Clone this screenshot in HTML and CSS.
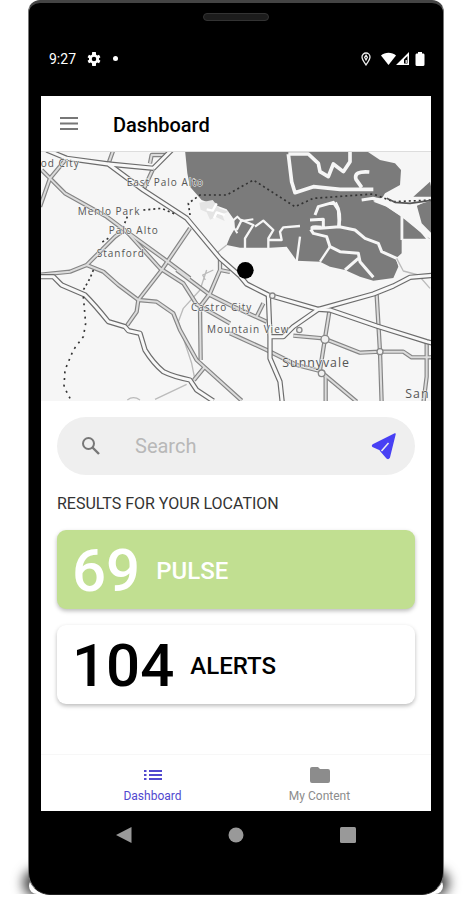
FILE: index.html
```html
<!DOCTYPE html>
<html lang="en">
<head>
<meta charset="utf-8">
<meta name="viewport" content="width=device-width, initial-scale=1">
<title>Dashboard</title>
<link rel="stylesheet" href="styles.css">
</head>
<body>
<div class="phone">
  <div class="speaker"></div>
  <div class="status">
    <span class="time">9:27</span>
    <svg class="gear" width="14" height="14" viewBox="2 2 20 20" aria-hidden="true"><path fill="#fff" fill-rule="evenodd" d="M19.1 13c.1-.7.1-1.3 0-2l2.1-1.600-2-3.500-2.500 1-1.700-1L14.600 2H9.400L9 5.900l-1.700 1-2.500-1-2 3.500L4.900 11c-.1.700-.1 1.300 0 2l-2.100 1.600 2 3.500 2.500-1 1.700 1 .4 3.900h5.200l.4-3.900 1.700-1 2.500 1 2-3.500zM12 15.200a3.200 3.200 0 1 1 0-6.400 3.200 3.200 0 0 1 0 6.400z"/></svg>
    <span class="dot"></span>
    <span class="spacer"></span>
    <svg class="pin" width="10" height="14" viewBox="0 0 10 14" fill="none" stroke="#eee" aria-hidden="true"><path stroke-width="1.300" d="M5 13C3 10 1 7.500 1 5a4 4 0 0 1 8 0c0 2.500-2 5-4 8z"/><path stroke-width="1.200" d="M5 3.200 3.600 5.400 5 8l1.400-2.600z"/></svg>
    <svg width="15" height="13" viewBox="0 0 15 13" aria-hidden="true"><path fill="#fff" d="M0 3.500C4-.2 11-.2 15 3.500L7.500 13z"/></svg>
    <svg class="signal" width="13" height="13" viewBox="0 0 13 13" aria-hidden="true"><path fill="#fff" fill-rule="evenodd" d="M13 0v13H0zM11.500 4 8 7.500v4h3.500z"/><path fill="#fff" d="M9.600 8h1.200v3H9.600z"/></svg>
    <svg width="10" height="14" viewBox="0 0 10 14" aria-hidden="true"><path fill="#fff" d="M3 0h4v1.500h1.500Q9.500 1.500 9.500 3v9.500q0 1.500-1.500 1.500H2Q.5 14 .5 12.500V3q0-1.500 1-1.500H3z"/></svg>
  </div>

  <div class="screen">
    <header class="appbar">
      <button class="menu" aria-label="Menu"><svg width="20" height="14" viewBox="0 0 20 14"><path d="M1 1h18M1 6.500h18M1 12h18" stroke="#777" stroke-width="1.800"/></svg></button>
      <h1>Dashboard</h1>
    </header>

    <svg class="map" viewBox="3 6 1170 747" role="img" aria-label="Map">
      <defs>
        <g id="highways">
          <path d="M20 0 80 25 205 42 310 120 440 205 540 325 600 378 620 402 685 435 835 478 870 480 1010 528 1160 575 1180 580"/>
          <path d="M835 478 1000 432 1060 408 1110 382 1180 376"/>
          <path d="M0 380H40L65 405 135 435Q165 465 205 515L255 530 265 542 300 550 315 600Q340 640 370 665 400 680 450 690L470 720 520 753"/>
          <path d="M685 435 690 560V625L720 695 727 760M835 478 760 530 730 560H690M340 55 395 0M205 42 340 55"/>
        </g>
        <g id="roads">
          <path d="M80 25 30 85 75 130 200 200 260 245 370 325 450 385M30 85 5 60M30 85 0 170M205 42 220 0M340 55 310 120M330 40 335 15 375 15"/>
          <path d="M410 360 510 435 570 465 680 515M260 245 360 355 430 400 470 463 570 520M570 550 680 600 770 645 840 663 950 755"/>
          <path d="M0 374 90 365 140 345 225 260 245 245M140 345 190 365 235 405 295 450 290 485 262 525M295 450 365 360 450 235M295 450 350 455 400 490 420 540 470 630 605 752M495 650 462 690M480 470 482 630M480 470 510 430 540 360V320"/>
          <path d="M760 557 850 565 960 608 1020 605H1090L1115 622H1180M868 485 855 565 840 660 857 680V760M1010 435 1020 605 1025 760M1160 575V680L1150 760M670 460 650 500M540 360 570 366"/>
        </g>
      </defs>
      <rect x="0" width="1180" height="760" fill="#f6f6f6"/>
      <path fill="#7b7b7b" d="M435 0 442 70 450 110 485 150 560 178 583 210 585 235 570 260 560 285 600 293 690 293 740 290 770 332 840 335 870 350 915 360 960 380 1000 392 1060 384 1075 350 1068 325 1085 310V200L1040 170 1000 155 1028 142 1035 130 1080 105 1083 60 1065 40 1020 30 975 0zM1090 205 1145 250 1170 266H1090zM1130 165 1180 150V255L1145 220zM1120 140 1170 95 1180 140z"/>
      <g class="channels">
        <path stroke-width="11" d="M745 12 755 95 765 128 820 110 900 118H1000M745 12H805L835 40 840 65 865 80 880 42 910 65 930 35V0M988 66Q940 62 948 88L965 112"/>
        <path stroke-width="9" d="M825 195 835 170 880 157 895 180 898 230 840 235 815 234M850 230V208L810 210M898 230 945 240 975 265 1015 280 1025 305 1070 325 1085 355 1120 365M812 238 820 250 860 260 870 290 900 305 955 310 960 335 1000 382M955 325 915 360M965 150 1000 145 1040 165 1085 195"/>
        <path stroke-width="7" d="M590 240 605 210 640 225 615 265V295M645 230 670 212 700 240 685 265V295M685 270H725L720 245 730 232 780 228M780 260 770 335M870 290 840 335M1085 190V270M1085 190 1145 245 1170 275M1120 210 1128 165 1160 150"/>
        <path stroke-width="10" d="M886 158Q905 190 896 230M820 238Q805 228 845 232M1000 146 1030 152"/>
        <path stroke-width="6" d="M575 215 592 200 605 213 640 208M583 235 592 250"/>
      </g>
      <path fill="#e4e4e4" d="m478 158 40-8 20 25 28 10-20 8 8 20-26-12-18 8-10-22-18-8z"/>
      <path fill="none" stroke="#fff" stroke-width="7" d="m500 178 18 4 12-22M522 205l8-18 24 8"/>
      <path class="creek" d="M560 285l-25 20-3 20M520 360l-32 15 8 15M500 360l-20 60-50 55-15 40 20 65 20 60 8 40M345 748l95-45M262 750q18-14 38 0M1070 325l20 38 45 12 35 40"/>
      <use href="#roads" class="road-edge"/>
      <use href="#roads" class="road-fill"/>
      <use href="#highways" class="highway-edge"/>
      <use href="#highways" class="highway-fill"/>
      <g class="junctions"><circle cx="855" cy="568" r="12"/><circle cx="1020" cy="605" r="9"/><circle cx="697" cy="437" r="8"/><circle cx="845" cy="670" r="10"/><circle cx="778" cy="540" r="8"/></g>
      <path class="ferry" d="M450 195 445 160 480 135 560 135 640 90 765 170 820 145 1000 132 1060 155 1180 150M310 180 365 175 405 192M262 200 250 230M205 265 180 280M160 360 150 385 130 420"/>
      <path class="ferry trail" d="M130 440 137 520 130 560 100 600 75 660 72 710 90 745"/>
      <path fill="none" stroke="#555" stroke-width="5" d="M1040 145 1065 157 1110 160 1180 150"/>
      <g class="places">
        <text x="2" y="52">od City</text>
        <text x="260" y="107">East Palo Alto</text>
        <text x="113" y="195">Menlo Park</text>
        <text x="206" y="251">Palo Alto</text>
        <text x="170" y="321">Stanford</text>
        <text x="453" y="484">Castro City</text>
        <text x="501" y="548">Mountain View</text>
        <text class="city" x="727" y="651">Sunnyvale</text>
        <text class="city" x="1096" y="744">San</text>
      </g>
      <circle cx="616" cy="361" r="25"/>
    </svg>

    <main>
      <form class="search" role="search">
        <svg width="20" height="20" viewBox="0 0 20 20" fill="none" stroke="#777" aria-hidden="true"><circle cx="7.500" cy="7.500" r="5.500" stroke-width="2"/><path d="m11.500 11.500 6.500 6.500" stroke-width="2.400"/></svg>
        <input type="search" placeholder="Search" aria-label="Search">
        <button type="button" aria-label="Use my location"><svg width="26" height="28" viewBox="0 0 26 28"><path fill="#4840f4" stroke="#4840f4" stroke-width="1.500" stroke-linejoin="round" d="M24 2 2 13q-1 .8.300 1.500L9 17.500l1 1.500 6 7q1.500 1 2.200-.5z"/><path d="M10.500 19 17.500 11" stroke="#efefef" stroke-width="1.500"/></svg></button>
      </form>
      <h2>RESULTS FOR YOUR LOCATION</h2>
      <section class="card pulse"><strong>69</strong><span>PULSE</span></section>
      <section class="card"><strong>104</strong><span>ALERTS</span></section>
    </main>

    <nav class="tabs">
      <a class="active" href="#dashboard"><svg width="20" height="18" viewBox="0 0 20 18"><path d="M1 5h2.500M1 9h2.500M1 13h2.500M6 5h13M6 9h13M6 13h13" stroke="#5148cf" stroke-width="2"/></svg>Dashboard</a>
      <a href="#content"><svg width="20" height="18" viewBox="0 0 20 18"><path fill="#8c8c8c" d="M2 1h6l2 2h8q2 0 2 2v10q0 2-2 2H2q-2 0-2-2V3q0-2 2-2z"/></svg>My Content</a>
    </nav>
  </div>

  <div class="system">
    <button aria-label="Back"><svg width="16" height="16" viewBox="0 0 16 16"><path d="M15.500 0v16L0 8z"/></svg></button>
    <button aria-label="Home"><svg width="16" height="16" viewBox="0 0 16 16"><circle cx="8" cy="8" r="7.500"/></svg></button>
    <button aria-label="Recent apps"><svg width="16" height="16" viewBox="0 0 16 16"><rect width="16" height="16" rx="1.500"/></svg></button>
  </div>
</div>
</body>
</html>
```
FILE: styles.css
```css
* { box-sizing: border-box; }

body {
  margin: 0;
  padding: 0 27px 5px 28px;
  background: #fff;
  font-family: Roboto, "Liberation Sans", sans-serif;
  color: #000;
}

button {
  display: flex;
  padding: 0;
  border: 0;
  background: none;
}

svg { flex: none; }

.phone {
  position: relative;
  padding: 10px 12px 0;
  background: #000;
  border: 1px solid #777;
  border-top: 3px solid #444;
  border-bottom-color: #222;
  border-radius: 12px 12px 22px 22px;
}

.phone::before {
  content: "";
  position: absolute;
  z-index: -1;
  left: 0;
  right: 0;
  bottom: 0;
  height: 16px;
  border-radius: 12px;
  box-shadow: 0 -3px 12px 6px #000b;
  clip-path: inset(-24px -24px 0);
}

.speaker {
  width: 66px;
  height: 8px;
  margin: 0 auto;
  border: 1px solid #333;
  border-radius: 4px;
  background: #1c1c1c;
}

.status {
  display: flex;
  align-items: center;
  height: 75px;
  padding: 0 6px 0 8px;
  color: #fff;
}

.time { font-size: 14px; }
.gear { margin-left: 11px; }
.dot { width: 5px; height: 5px; margin-left: 12px; border-radius: 50%; background: #fff; }
.spacer { flex: 1; }
.pin { margin-right: 10px; }
.signal { margin-right: 6px; }

.screen {
  display: flex;
  flex-direction: column;
  background: #fff;
}

.appbar {
  display: flex;
  align-items: center;
  gap: 34px;
  height: 56px;
  padding: 0 18px;
  border-bottom: 1px solid #ddd;
}

h1 {
  margin: 0;
  padding-top: 2px;
  font-size: 20px;
  font-weight: 500;
}

.map { display: block; width: 100%; height: auto; }
.map path, .map use { stroke-linejoin: round; }
.channels { fill: none; stroke: #f6f6f6; }
.creek { fill: none; stroke: #bbb; stroke-width: 4px; }
.road-edge, .road-fill, .highway-edge, .highway-fill { fill: none; }
.road-edge { stroke: #858585; stroke-width: 13px; }
.road-fill { stroke: #dcdcdc; stroke-width: 6px; }
.highway-edge { stroke: #6c6c6c; stroke-width: 16px; }
.highway-fill { stroke: #f8f8f8; stroke-width: 9px; }
.junctions { fill: #f1f1f1; stroke: #888; stroke-width: 4px; }
.ferry { fill: none; stroke: #333; stroke-width: 5px; stroke-dasharray: 6 9; }
.ferry.trail { stroke-dasharray: 6 14; }

.places {
  fill: #555;
  stroke: #f6f6f6;
  stroke-width: 3px;
  paint-order: stroke;
  font-family: "Open Sans", sans-serif;
  font-size: 30px;
  letter-spacing: 3px;
}

.places .city { font-size: 37px; }

main { padding: 16px 16px 34px; }

.search {
  display: flex;
  align-items: center;
  height: 58px;
  padding: 0 18px 0 24px;
  border-radius: 29px;
  background: #efefef;
}

.search input {
  flex: 1;
  min-width: 0;
  margin-left: 34px;
  padding: 0;
  border: 0;
  outline: 0;
  background: none;
  font: 20px Roboto, sans-serif;
}

.search input::placeholder { color: #b8b8b8; }

h2 {
  margin: 19px 0 16px;
  font-size: 16px;
  line-height: 20px;
  font-weight: 400;
  color: #333;
}

.card {
  display: flex;
  align-items: center;
  gap: 16px;
  height: 79px;
  margin-bottom: 16px;
  padding: 2px 15px 0;
  border-radius: 9px;
  box-shadow: 0 2px 4px #0004;
}

.card strong { font-size: 60px; font-weight: 500; }
.card span { font-size: 24px; font-weight: 500; }
.card.pulse { background: #c1df91; color: #fff; }

.tabs {
  display: flex;
  height: 57px;
  padding: 0 28px;
  border-top: 1px solid #f7f7f7;
}

.tabs a {
  display: flex;
  flex: 1;
  flex-direction: column;
  align-items: center;
  gap: 5px;
  padding-top: 11px;
  font-size: 12px;
  line-height: 14px;
  color: #8c8c8c;
  text-decoration: none;
}

.tabs .active { color: #5148cf; }

.system {
  display: flex;
  justify-content: space-between;
  height: 83px;
  padding: 16px 75px;
}

.system svg { fill: #999; }
```
